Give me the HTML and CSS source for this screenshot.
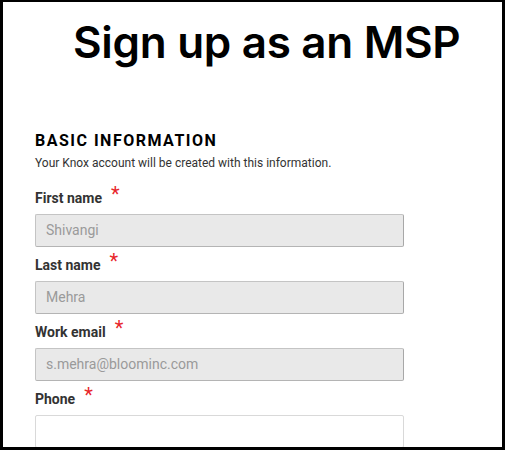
FILE: index.html
```html
<!DOCTYPE html>
<html>
<head>
<meta charset="utf-8">
<link rel="stylesheet" href="styles.css">
</head>
<body>
<div class="frame">
  <h1 class="title">Sign up as an MSP</h1>
  <section class="form">
    <h2 class="section-title">BASIC INFORMATION</h2>
    <p class="section-desc">Your Knox account will be created with this information.</p>
    <div class="field">
      <label class="label">First name<span class="req">*</span></label>
      <div class="input disabled">Shivangi</div>
    </div>
    <div class="field">
      <label class="label">Last name<span class="req">*</span></label>
      <div class="input disabled">Mehra</div>
    </div>
    <div class="field">
      <label class="label">Work email<span class="req">*</span></label>
      <div class="input disabled">s.mehra@bloominc.com</div>
    </div>
    <div class="field">
      <label class="label">Phone<span class="req">*</span></label>
      <div class="input"></div>
    </div>
  </section>
</div>
</body>
</html>
```
FILE: styles.css
```css
html, body {
  margin: 0;
  padding: 0;
  background: #000;
}
body {
  width: 505px;
  height: 450px;
  overflow: hidden;
}
.frame {
  box-sizing: border-box;
  width: 505px;
  height: 450px;
  border-style: solid;
  border-color: #000;
  border-width: 2px 3px 3px 3px;
  background: #fff;
  overflow: hidden;
}
.title {
  margin: 12px 0 0 70px;
  font-family: "Inter", sans-serif;
  font-weight: 600;
  font-size: 44px;
  line-height: 56px;
  color: #000;
  letter-spacing: -0.3px;
}
.form {
  padding: 0 0 0 32px;
  width: 369px;
  margin-top: 61px;
}
.section-title {
  margin: 0;
  font-family: Roboto, sans-serif;
  font-weight: 700;
  font-size: 16px;
  line-height: 20px;
  letter-spacing: 1.5px;
  color: #000;
}
.section-desc {
  margin: 4px 0 9px 0;
  font-family: Roboto, sans-serif;
  font-size: 12px;
  line-height: 16px;
  color: #333;
}
.field {
  display: flex;
  flex-direction: column;
}
.label {
  display: flex;
  align-items: flex-start;
  font-family: Roboto, sans-serif;
  font-weight: 700;
  font-size: 14px;
  line-height: 18px;
  color: #333;
  padding-top: 9px;
  margin-bottom: 7px;
}
.req {
  color: #e8262b;
  font-size: 20px;
  font-weight: 400;
  line-height: 14px;
  margin-left: 9px;
  margin-top: -2px;
}
.input {
  box-sizing: border-box;
  height: 33px;
  border: 1px solid #c4c4c4;
  border-right-color: #a8a8a8;
  border-bottom-color: #b4b4b4;
  border-radius: 2px;
  background: #fff;
  font-family: Roboto, sans-serif;
  font-size: 14px;
  line-height: 31px;
  padding-left: 10px;
  color: #9a9a9a;
}
.input.disabled {
  background: #e9e9e9;
}
.input:not(.disabled) {
  border-color: #d9d9d9;
}
```
